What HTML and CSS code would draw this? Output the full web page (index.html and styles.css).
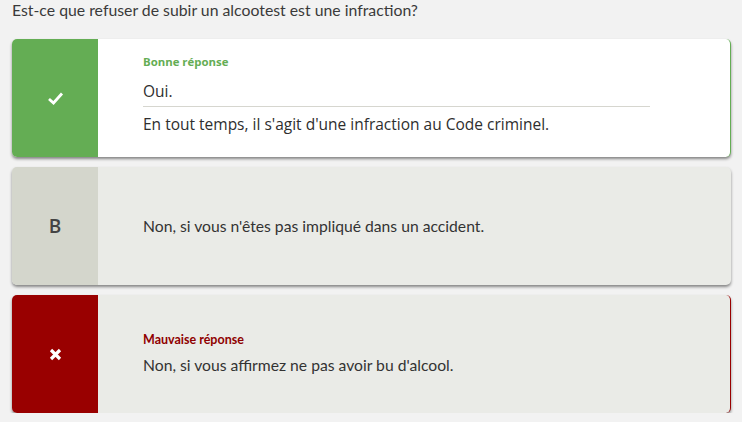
FILE: index.html
```html
<!DOCTYPE html>
<html lang="fr">
<head>
<meta charset="utf-8">
<link rel="stylesheet" href="styles.css">
</head>
<body>
<div class="page">
  <p class="question">Est-ce que refuser de subir un alcootest est une infraction?</p>
  <div class="answers">
    <div class="card card-good">
      <div class="side">
        <svg width="17" height="15" viewBox="0 0 17 15"><path d="M2 8 L6.5 12 L15 2.5" fill="none" stroke="#fff" stroke-width="2.8"/></svg>
      </div>
      <div class="body">
        <div class="label">Bonne réponse</div>
        <div class="answer">Oui.</div>
        <div class="explain">En tout temps, il s'agit d'une infraction au Code criminel.</div>
      </div>
    </div>
    <div class="card card-neutral">
      <div class="side"><span class="letter">B</span></div>
      <div class="body">
        <div class="answer lato">Non, si vous n'êtes pas impliqué dans un accident.</div>
      </div>
    </div>
    <div class="card card-bad">
      <div class="side">
        <svg width="13" height="13" viewBox="0 0 13 13"><path d="M2 2 L11 11 M11 2 L2 11" fill="none" stroke="#fff" stroke-width="3.2"/></svg>
      </div>
      <div class="body">
        <div class="label lato">Mauvaise réponse</div>
        <div class="answer lato">Non, si vous affirmez ne pas avoir bu d'alcool.</div>
      </div>
    </div>
  </div>
</div>
</body>
</html>
```

FILE: styles.css
```css
html, body {
  margin: 0;
  padding: 0;
  background: #f2f2f2;
}
.page {
  padding: 0 11px 0 12px;
  font-family: Lato, "Liberation Sans", sans-serif;
  color: #333;
}
.question {
  margin: 0;
  height: 39px;
  line-height: 20px;
  font-size: 15.8px;
  color: #3a3a3a;
}
.answers {
  display: flex;
  flex-direction: column;
  gap: 10px;
}
.card {
  display: flex;
  height: 118px;
  border-radius: 5px;
  overflow: hidden;
  box-shadow: 0 2px 3px rgba(0,0,0,0.45);
  background: #eaebe7;
}
.side {
  width: 86px;
  flex: none;
  display: flex;
  align-items: center;
  justify-content: center;
}
.body {
  flex: 1;
  padding-left: 45px;
  display: flex;
  flex-direction: column;
  justify-content: center;
}
.card-good {
  background: #fff;
  border-right: 1px solid #64ad54;
}
.card-good .side { background: #64ad54; }
.card-good .body {
  font-family: "Open Sans", "DejaVu Sans", sans-serif;
  padding-right: 80px;
}
.card-good .label {
  color: #64ad54;
  font-size: 11.4px;
  font-weight: bold;
  line-height: 14px;
  margin-bottom: 13px;
}
.card-good .answer {
  font-size: 15.5px;
  line-height: 18px;
  padding-bottom: 6px;
  border-bottom: 1px solid #d6d6cf;
  color: #2e2e2e;
}
.card-good .explain {
  font-size: 15.5px;
  line-height: 18px;
  padding-top: 8px;
  padding-bottom: 9px;
  color: #2e2e2e;
}
.card-neutral .side { background: #d4d6cc; }
.letter {
  font-family: "Open Sans", sans-serif;
  font-size: 19px;
  font-weight: 600;
  color: #444;
}
.lato { font-family: Lato, "Liberation Sans", sans-serif; }
.answer.lato {
  font-size: 15.7px;
  line-height: 20px;
  color: #333;
}
.card-bad {
  border-right: 1px solid #990000;
}
.card-bad .side { background: #990000; }
.card-bad .label {
  color: #8f0000;
  font-size: 12.5px;
  font-weight: bold;
  line-height: 14px;
  margin-bottom: 8px;
  padding-top: 0;
}
```
